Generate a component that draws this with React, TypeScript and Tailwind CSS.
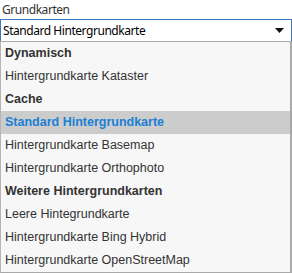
import React from 'react';

type Item = { label: string; group?: boolean; active?: boolean };

const items: Item[] = [
    { label: 'Dynamisch', group: true },
    { label: 'Hintergrundkarte Kataster' },
    { label: 'Cache', group: true },
    { label: 'Standard Hintergrundkarte', active: true },
    { label: 'Hintergrundkarte Basemap' },
    { label: 'Hintergrundkarte Orthophoto' },
    { label: 'Weitere Hintergrundkarten', group: true },
    { label: 'Leere Hintegrundkarte' },
    { label: 'Hintergrundkarte Bing Hybrid' },
    { label: 'Hintergrundkarte OpenStreetMap' },
];

export default function App() {
    return (
        <div className="w-[292px] h-[273px] bg-white overflow-hidden">
            <div className="h-[19px] pl-[2px] pt-[1px] text-[12px] leading-[17px] tracking-[-0.45px] text-[#333] font-['Noto_Sans',sans-serif]">
                Grundkarten
            </div>
            <div className="h-[22px] border border-b-0 border-[#3c78b5] bg-white flex items-center justify-between pl-[2px] pr-[7px] text-[12px] tracking-[-0.45px] text-black font-['Noto_Sans',sans-serif]">
                <span>Standard Hintergrundkarte</span>
                <svg width="9" height="5" viewBox="0 0 9 5">
                    <path d="M0 0h9L4.5 5z" fill="#111" />
                </svg>
            </div>
            <ul className="border-t border-t-[#a9a9a9] border-l border-l-[#b4b4b4] border-r-2 border-r-[#a8a8a8] border-b-2 border-b-[#a8a8a8] bg-[#f7f7f7] font-['Liberation_Sans',Arial,sans-serif] text-[12.5px]">
                {items.map((it) => (
                    <li
                        key={it.label}
                        className={
                            'h-[23px] flex items-center pl-[4px] ' +
                            (it.active
                                ? 'bg-[#cccccc] text-[#1a7fd4] font-bold'
                                : it.group
                                  ? 'text-[#333] font-bold'
                                  : 'text-[#333]')
                        }
                    >
                        {it.label}
                    </li>
                ))}
            </ul>
        </div>
    );
}
